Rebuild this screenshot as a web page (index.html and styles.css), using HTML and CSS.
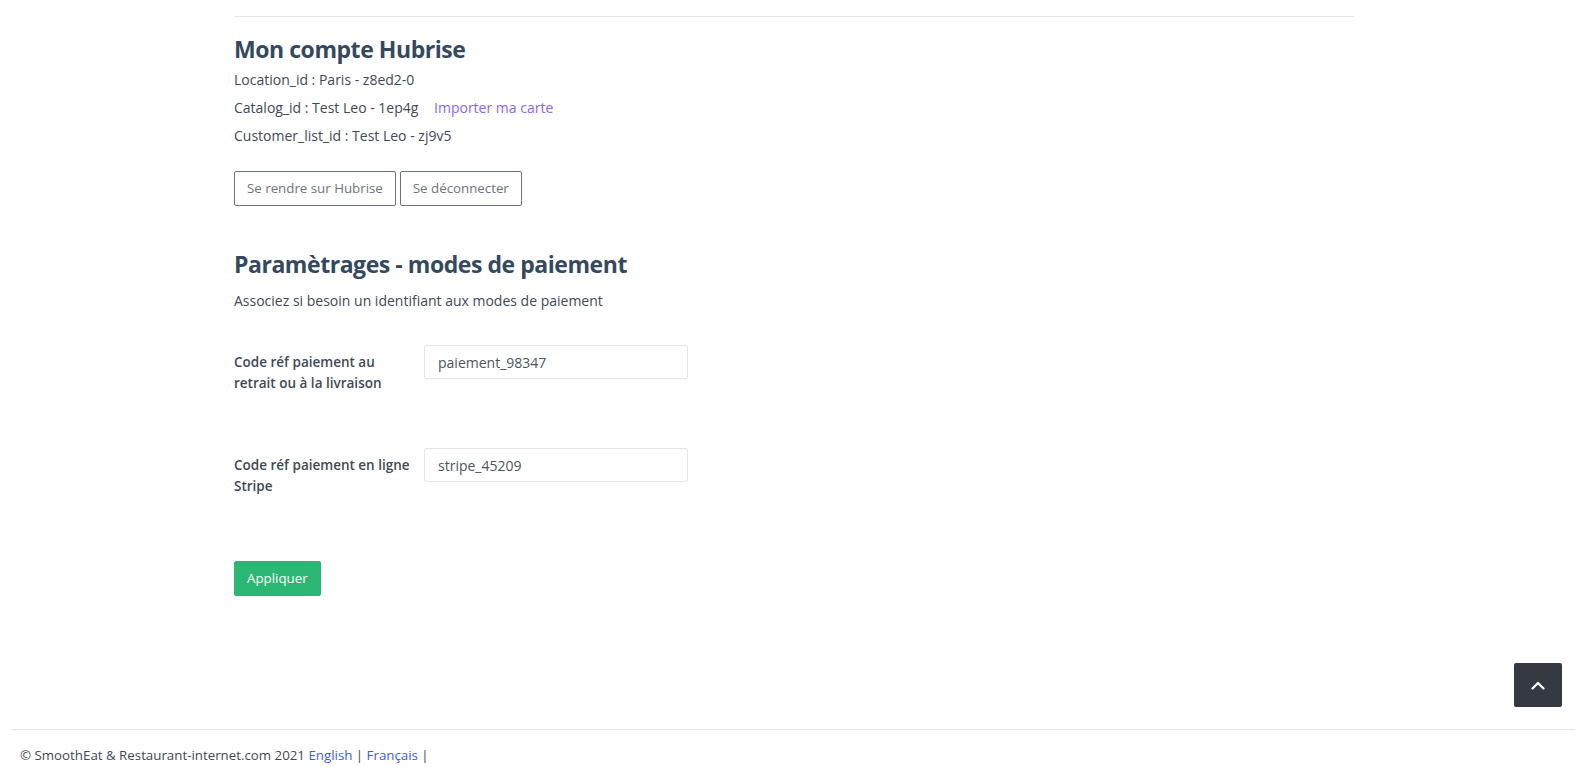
FILE: index.html
```html
<!DOCTYPE html>
<html lang="fr">
<head>
<meta charset="utf-8">
<title>Mon compte Hubrise</title>
<link rel="stylesheet" href="styles.css">
</head>
<body>
<div class="page">
  <main class="container">
    <hr class="sep">
    <section class="account">
      <h4 class="title">Mon compte Hubrise</h4>
      <p class="info">Location_id : Paris - z8ed2-0</p>
      <p class="info">Catalog_id : Test Leo - 1ep4g <a class="link-import" href="#">Importer ma carte</a></p>
      <p class="info">Customer_list_id : Test Leo - zj9v5</p>
      <div class="actions">
        <a class="btn btn-outline" href="#">Se rendre sur Hubrise</a>
        <a class="btn btn-outline" href="#">Se déconnecter</a>
      </div>
    </section>
    <section class="payment">
      <h4 class="title">Paramètrages - modes de paiement</h4>
      <p class="info">Associez si besoin un identifiant aux modes de paiement</p>
      <form class="form">
        <div class="form-row">
          <label class="form-label" for="p1">Code réf paiement au retrait ou à la livraison</label>
          <input class="form-input" id="p1" type="text" value="paiement_98347">
        </div>
        <div class="form-row">
          <label class="form-label" for="p2">Code réf paiement en ligne Stripe</label>
          <input class="form-input" id="p2" type="text" value="stripe_45209">
        </div>
        <button class="btn btn-success" type="button">Appliquer</button>
      </form>
    </section>
  </main>
  <footer class="footer">
    <span>© SmoothEat &amp; Restaurant-internet.com 2021 <a class="footer-link" href="#">English</a> | <a class="footer-link" href="#">Français</a> |</span>
  </footer>
</div>
<a class="scroll-top" href="#" aria-label="Haut de page">
  <svg width="14" height="9" viewBox="0 0 14 9"><path d="M1.5 7.5 L7 2 L12.5 7.5" fill="none" stroke="#ffffff" stroke-width="2.2" stroke-linecap="round" stroke-linejoin="round"/></svg>
</a>
</body>
</html>
```
FILE: styles.css
```css
* { box-sizing: border-box; }
html, body { margin: 0; padding: 0; }
body {
  font-family: "Open Sans", "Noto Sans", sans-serif;
  font-size: 14px;
  line-height: 1.5;
  color: #3e4a57;
  background: #ffffff;
}
.page {
  min-height: 100vh;
  display: flex;
  flex-direction: column;
}
.container {
  width: 1123px;
  margin: 0 auto;
  padding: 16px 0 0 3px;
}
.sep {
  margin: 0;
  border: 0;
  border-top: 1px solid #e6e6e6;
}
.title {
  margin: 0;
  font-size: 23px;
  font-weight: 700;
  line-height: 28px;
  color: #34495e;
  letter-spacing: -0.45px;
}
.account .title { margin-top: 18px; margin-bottom: 6px; }
.info { margin: 0 0 7px; }
.link-import {
  color: #8a66f0;
  text-decoration: none;
  margin-left: 12px;
}
.actions {
  display: flex;
  gap: 4px;
  margin-top: 25px;
}
.btn {
  display: inline-block;
  font-family: inherit;
  font-size: 13.3px;
  line-height: 21px;
  padding: 6px 12px;
  border-radius: 2px;
  text-decoration: none;
  cursor: pointer;
}
.btn-outline {
  border: 1px solid #6c757d;
  color: #6c757d;
  background: #fff;
}
.payment { padding-top: 44px; }
.payment .title { margin-bottom: 12px; }
.form { margin-top: 34px; }
.form-row {
  display: grid;
  grid-template-columns: 182px 264px;
  column-gap: 8px;
  align-items: start;
  margin-bottom: 54px;
}
.form-label {
  font-weight: 600;
  font-size: 13.5px;
  line-height: 21px;
  padding-top: 7px;
  color: #3e4a57;
}
.form-input {
  height: 34px;
  width: 264px;
  border: 1px solid #e6e6e6;
  border-radius: 2px;
  padding: 6px 13px;
  font-family: inherit;
  font-size: 14px;
  color: #4a5561;
  background: #fff;
  outline: none;
}
.btn-success {
  background: #2bb673;
  border: 1px solid #2bb673;
  color: #ffffff;
  margin-top: 10px;
}
.footer {
  margin: auto 10px 0;
  border-top: 1px solid #e6e6e6;
  padding: 15px 10px 1px;
  font-size: 13.3px;
  line-height: 21px;
  color: #3e4a57;
}
.footer-link { color: #3b5bfd; text-decoration: none; }
.scroll-top {
  position: fixed;
  right: 23px;
  bottom: 60px;
  width: 48px;
  height: 44px;
  background: #343a40;
  border-radius: 2px;
  display: flex;
  align-items: center;
  justify-content: center;
}
```
